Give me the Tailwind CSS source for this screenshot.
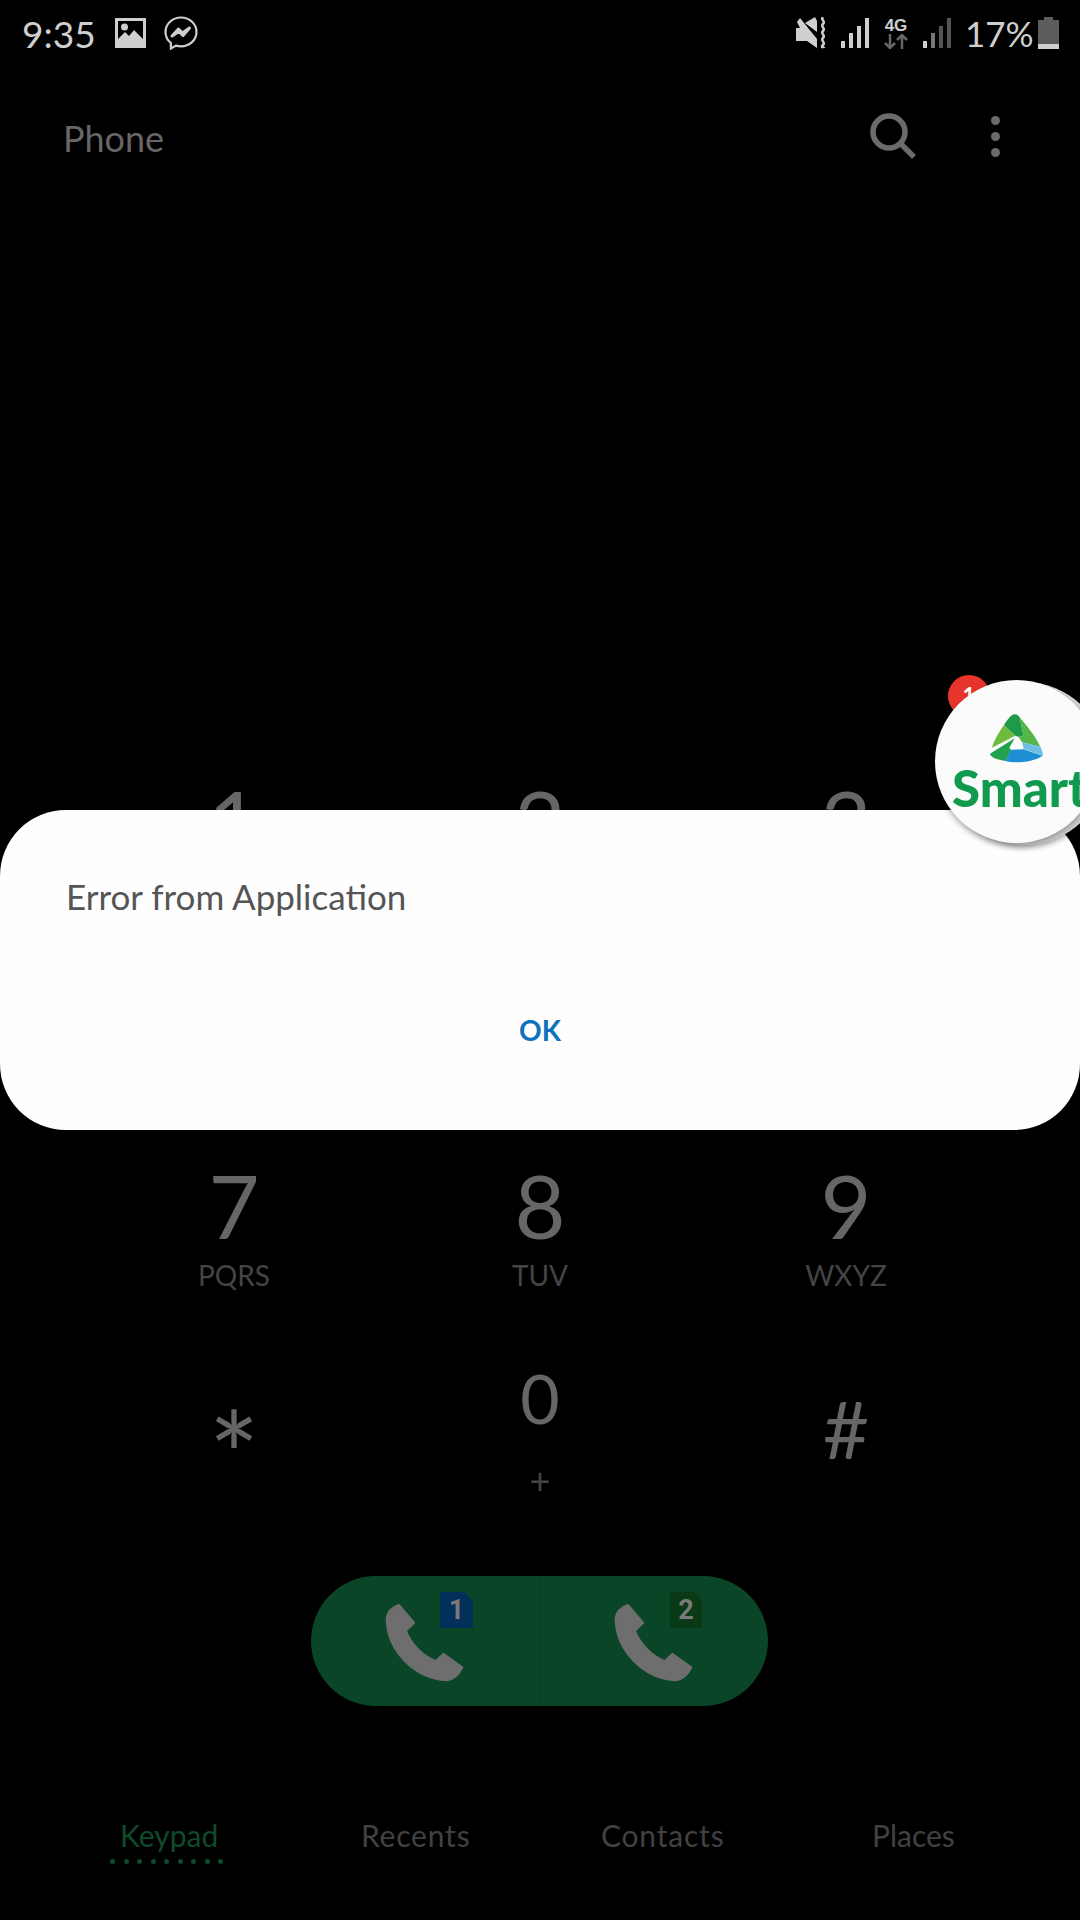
<!doctype html>
<html>
<head>
<meta charset="utf-8">
<script src="https://cdn.jsdelivr.net/npm/@tailwindcss/browser@4"></script>
</head>
<body class="m-0 bg-black">
<div class="relative w-[1080px] h-[1920px] overflow-hidden bg-black font-['Lato','Liberation_Sans',sans-serif]">

  <!-- status bar -->
  <div class="flex items-center justify-between h-[66px] pl-[22px] pr-[21px]">
    <div class="flex items-center">
      <span class="text-[37px] leading-none text-[#cfcfcf] w-[93px]">9:35</span>
      <svg class="w-[31px] h-[30px]" viewBox="0 0 31 30"><path fill="#cfcfcf" fill-rule="evenodd" d="M0 0h31v30H0zM3 3v18l7-7 4 4 5-6 9 9V3z"/><circle cx="9.500" cy="9" r="3.500" fill="#cfcfcf"/></svg>
      <svg class="w-[34px] h-[34px] ml-[18px]" viewBox="0 0 34 34" fill="none"><path stroke="#cfcfcf" stroke-width="2.200" d="M17 1.500C8.300 1.500 1.500 8 1.500 16c0 4.500 2 8.300 5.400 11v5.500l5.100-2.900c1.500.5 3.200.7 5 .7 8.700 0 15.500-6.400 15.500-14.300S25.700 1.500 17 1.500z"/><path stroke="#cfcfcf" stroke-width="3" stroke-linejoin="round" d="M8 20l6.500-7 4 4 7-5-6.500 7.500-4-4z"/></svg>
    </div>
    <div class="flex items-center">
      <svg class="w-[31px] h-[32px]" viewBox="0 0 31 32" fill="none"><path fill="#cfcfcf" d="M0 11h4L1 5l3-4 17 21v9L11 24H0z"/><path fill="#cfcfcf" d="M9 6l10-6 2 4v11z"/><path stroke="#cfcfcf" stroke-width="2.500" d="M27 0c-3 3 3 4 0 7s3 4 0 7 3 4 0 7 3 4 0 7 1 2 1 3"/></svg>
      <svg class="w-[28px] h-[30px] ml-[14px]" viewBox="0 0 28 30" fill="#cfcfcf"><rect x="0" y="23" width="4" height="7"/><rect x="8" y="15" width="4" height="15"/><rect x="16" y="8" width="4" height="22" /><rect x="24" y="0" width="4" height="30"/></svg>
      <div class="flex flex-col items-center w-[24px] ml-[15px] mr-[15px]">
        <span class="font-['Liberation_Sans'] font-bold text-[17px] leading-[16px] text-[#cfcfcf]">4G</span>
        <svg class="w-[24px] h-[15px]" viewBox="0 0 24 15" fill="none" stroke="#666" stroke-width="2.500"><path d="M6 0v14M1 9l5 5 5-5M18 15V1M13 6l5-5 5 5"/></svg>
      </div>
      <svg class="w-[28px] h-[30px]" viewBox="0 0 28 30"><rect x="0" y="23" width="4" height="7" fill="#cfcfcf"/><rect x="8" y="15" width="4" height="15" fill="#777"/><rect x="16" y="8" width="4" height="22" fill="#555"/><rect x="24" y="0" width="4" height="30" fill="#555"/></svg>
      <span class="ml-[14px] text-[35px] leading-none text-[#cfcfcf] w-[73px]">17%</span>
      <div class="flex flex-col items-center w-[21px] h-[32px]">
        <div class="w-[9px] h-[3px] bg-[#5c5c5c]"></div>
        <div class="w-[21px] h-[24px] bg-[#5c5c5c]"></div>
        <div class="w-[21px] h-[5px] bg-[#cfcfcf]"></div>
      </div>
    </div>
  </div>

  <!-- header -->
  <div class="flex items-center justify-between h-[94px] pl-[63px] pr-[80px] mt-[23px]">
    <span class="text-[36px] leading-none text-[#666666] pt-[3px]">Phone</span>
    <div class="flex items-center">
      <svg class="w-[46px] h-[46px]" viewBox="0 0 46 46" fill="none" stroke="#6b6b6b" stroke-width="5.500"><circle cx="19" cy="19" r="16"/><path d="M30.500 30.500L44 44"/></svg>
      <div class="flex flex-col gap-[7px] ml-[75px]">
        <div class="w-[9px] h-[9px] rounded-full bg-[#6b6b6b]"></div>
        <div class="w-[9px] h-[9px] rounded-full bg-[#6b6b6b]"></div>
        <div class="w-[9px] h-[9px] rounded-full bg-[#6b6b6b]"></div>
      </div>
    </div>
  </div>

  <!-- keypad -->
  <div class="grid grid-cols-3 px-[81px] pt-[594px] text-[#666666]">
    <div class="h-[189px] flex flex-col items-center"><span class="text-[88px] leading-[100px] mt-[-6px]">1</span></div>
    <div class="h-[189px] flex flex-col items-center"><span class="text-[88px] leading-[100px] mt-[-6px]">2</span></div>
    <div class="h-[189px] flex flex-col items-center"><span class="text-[88px] leading-[100px] mt-[-6px]">3</span></div>
    <div class="h-[189px] flex flex-col items-center"><span class="text-[88px] leading-[100px]">4</span></div>
    <div class="h-[189px] flex flex-col items-center"><span class="text-[88px] leading-[100px]">5</span></div>
    <div class="h-[189px] flex flex-col items-center"><span class="text-[88px] leading-[100px]">6</span></div>
    <div class="h-[189px] flex flex-col items-center">
      <span class="text-[88px] leading-[100px]">7</span>
      <span class="text-[28px] leading-[36px] text-[#444444] mt-[2px]">PQRS</span>
    </div>
    <div class="h-[189px] flex flex-col items-center">
      <span class="text-[88px] leading-[100px]">8</span>
      <span class="text-[28px] leading-[36px] text-[#444444] mt-[2px]">TUV</span>
    </div>
    <div class="h-[189px] flex flex-col items-center">
      <span class="text-[88px] leading-[100px]">9</span>
      <span class="text-[28px] leading-[36px] text-[#444444] mt-[2px]">WXYZ</span>
    </div>
    <div class="h-[189px] flex flex-col items-center pt-[50px]"><span class="text-[120px] leading-[120px]">*</span></div>
    <div class="h-[189px] flex flex-col items-center">
      <span class="text-[68px] leading-[80px] mt-[14px]">0</span>
      <span class="text-[36px] leading-[40px] text-[#444444] mt-[22px]">+</span>
    </div>
    <div class="h-[189px] flex flex-col items-center pt-[40px]"><span class="text-[80px] leading-[88px]">#</span></div>
  </div>

  <!-- call buttons -->
  <div class="flex w-[457px] h-[130px] ml-[311px] mt-[43px] rounded-full bg-[#0a4527] overflow-hidden">
    <div class="relative flex-1 border-r border-[#083a20]">
      <svg class="absolute left-[73px] top-[26px] w-[81px] h-[81px]" viewBox="280 120 245 245"><path fill="#6e6e6e" stroke="#6e6e6e" stroke-width="8" stroke-linejoin="round" d="M325 130L370 183L345 207C360 245 395 285 437 300L460 278L516 318C505 340 490 354 470 356C370 350 290 265 289 170C292 150 305 137 325 130Z"/></svg>
      <div class="absolute left-[129px] top-[16px] w-[33px] h-[36px] bg-[#03305a] [clip-path:polygon(0_0,75%_0,100%_25%,100%_100%,0_100%)] flex items-center justify-center font-['Roboto'] font-bold text-[27px] text-[#7a7a7a]">1</div>
    </div>
    <div class="relative flex-1">
      <svg class="absolute left-[73px] top-[26px] w-[81px] h-[81px]" viewBox="280 120 245 245"><path fill="#6e6e6e" stroke="#6e6e6e" stroke-width="8" stroke-linejoin="round" d="M325 130L370 183L345 207C360 245 395 285 437 300L460 278L516 318C505 340 490 354 470 356C370 350 290 265 289 170C292 150 305 137 325 130Z"/></svg>
      <div class="absolute left-[130px] top-[16px] w-[32px] h-[36px] bg-[#0a3a15] [clip-path:polygon(0_0,75%_0,100%_25%,100%_100%,0_100%)] flex items-center justify-center font-['Roboto'] font-bold text-[27px] text-[#7a7a7a]">2</div>
    </div>
  </div>

  <!-- tabs -->
  <div class="flex mt-[110px] text-[30px] leading-[38px] text-[#414141]">
    <div class="w-[120px]"></div>
    <div class="relative w-[241px] text-[#0f4a2a]">
      Keypad
      <div class="absolute left-[-10px] top-[43px] flex gap-[8.500px]">
        <i class="w-[5px] h-[5px] rounded-full bg-[#0f4a2a]"></i><i class="w-[5px] h-[5px] rounded-full bg-[#0f4a2a]"></i><i class="w-[5px] h-[5px] rounded-full bg-[#0f4a2a]"></i><i class="w-[5px] h-[5px] rounded-full bg-[#0f4a2a]"></i><i class="w-[5px] h-[5px] rounded-full bg-[#0f4a2a]"></i><i class="w-[5px] h-[5px] rounded-full bg-[#0f4a2a]"></i><i class="w-[5px] h-[5px] rounded-full bg-[#0f4a2a]"></i><i class="w-[5px] h-[5px] rounded-full bg-[#0f4a2a]"></i><i class="w-[5px] h-[5px] rounded-full bg-[#0f4a2a]"></i>
      </div>
    </div>
    <div class="w-[240px] tracking-[0.8px]">Recents</div>
    <div class="w-[271px] tracking-[0.8px]">Contacts</div>
    <div>Places</div>
  </div>

  <!-- dialog -->
  <div class="absolute left-0 top-[810px] w-[1080px] h-[320px] rounded-[66px] bg-[#fefefe] flex flex-col">
    <div class="pl-[66px] pt-[64px] text-[35px] leading-[44px] text-[#555555]">Error from Application</div>
    <div class="mt-[92px] text-center text-[28px] leading-[40px] font-bold text-[#0b72c0]">OK</div>
  </div>

  <!-- floating bubble -->
  <div class="absolute left-[948px] top-[675px] w-[42px] h-[42px] rounded-full bg-[#e8352c] text-white text-[22px] font-bold leading-[42px] text-center">1</div>
  <div class="absolute left-[943px] top-[682px] w-[163px] h-[163px] rounded-full bg-[#d4d4d4] shadow-[0_2px_6px_rgba(0,0,0,0.35)]"></div>
  <div class="absolute left-[935px] top-[680px] w-[163px] h-[163px] rounded-full bg-[#fbfbfb] shadow-[0_3px_6px_rgba(0,0,0,0.3)] overflow-hidden">
    <svg class="absolute left-[45px] top-[25px] w-[70px] h-[70px]" viewBox="0 0 210 210">
      <path fill="#6fbb3f" d="M72 60L106 92L36 128C42 105 58 80 72 60Z"/>
      <path fill="#1f9a4b" d="M72 60C82 45 92 30 102 28C110 27 114 30 120 38L130 92L116 96L106 92Z"/>
      <path fill="#55b548" d="M120 38C140 62 165 90 181 125L126 112L116 96L130 92Z"/>
      <path fill="#23a24d" d="M30 146C32 156 45 162 76 168L94 136L88 128L104 100Z"/>
      <path fill="#1e8fd5" d="M76 168C105 176 160 172 188 152L131 133L94 134Z"/>
      <path fill="#6cc0e4" d="M126 112L181 125C187 138 190 146 188 152C170 146 150 138 131 132Z"/>
      <path fill="#ffffff" d="M106 104L90 128L126 128Z"/>
    </svg>
    <span class="absolute left-[17px] top-[78px] font-['Lato'] font-black text-[51px] leading-[60px] text-[#0f9a4e] whitespace-nowrap">Smart</span>
  </div>
</div>
</body>
</html>
